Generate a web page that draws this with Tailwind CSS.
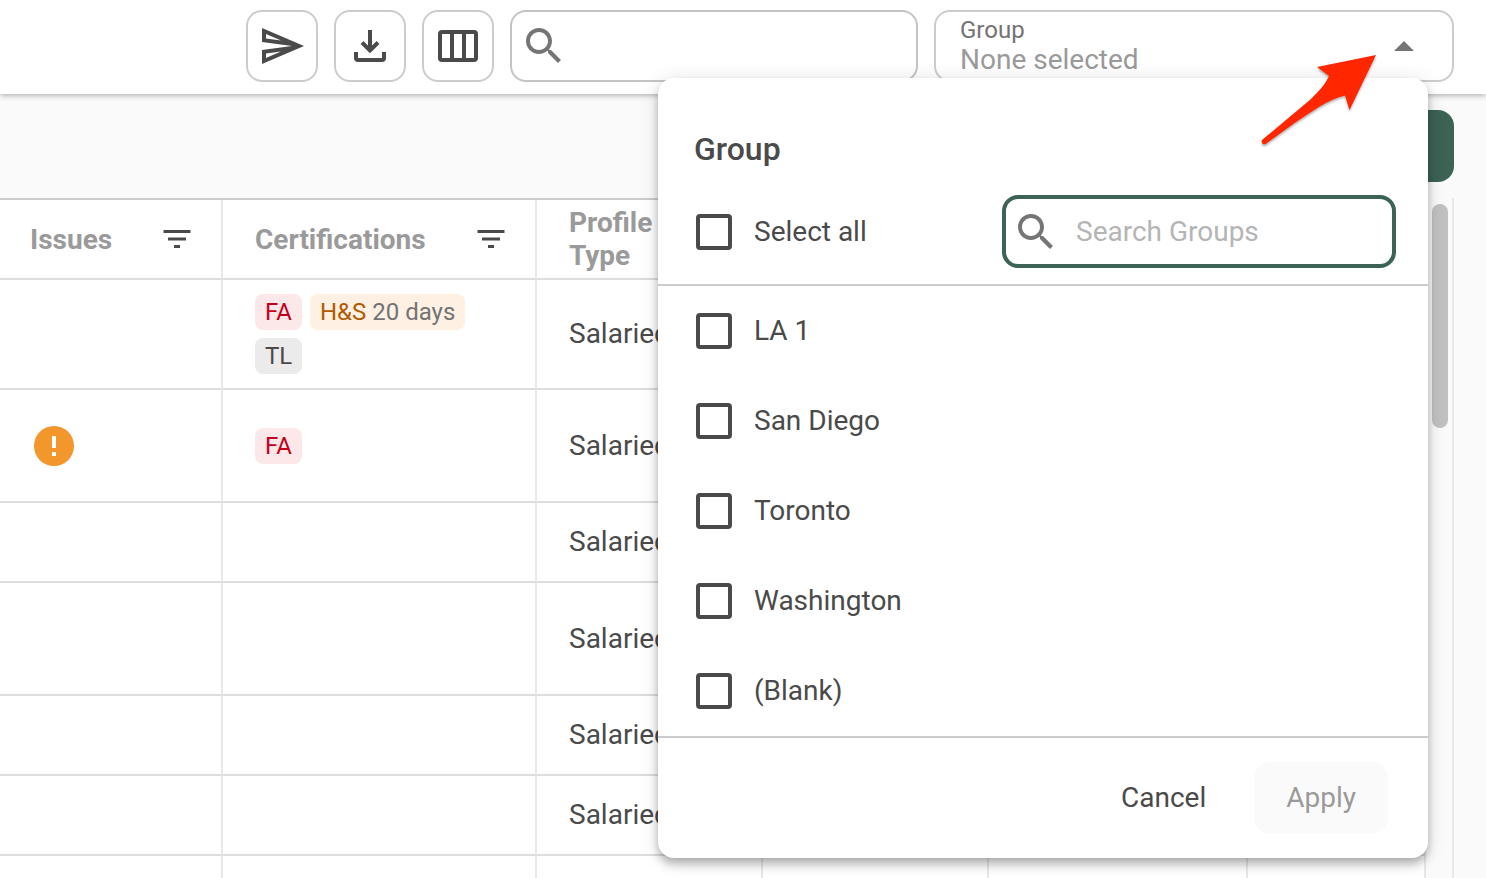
<!DOCTYPE html>
<html lang="en">
<head>
  <meta charset="UTF-8">
  <meta name="viewport" content="width=device-width, initial-scale=1.0">
  <title>Profiles</title>
  <script src="https://cdn.jsdelivr.net/npm/@tailwindcss/browser@4"></script>
</head>
<body class="h-screen overflow-hidden flex flex-col bg-[#fafafa] font-[Roboto,sans-serif] text-[28px] leading-8 text-[#4a4a4a]">

  <!-- Toolbar -->
  <header class="relative z-10 flex gap-4 bg-white pt-[10px] pb-3 pl-[246px] pr-8 shadow-[0_1px_6px_rgba(0,0,0,0.35)]">
    <button aria-label="Send" class="flex size-[72px] shrink-0 items-center justify-center rounded-2xl border-2 border-[#cccccc]">
      <svg class="size-12" viewBox="0 0 24 24" fill="#4a4a4a"><path d="M4.010 6.030l7.510 3.220-7.520-1 .01-2.220m7.500 8.720L4 17.970v-2.220l7.510-1M2.010 3L2 10l15 2-15 2 .01 7L23 12 2.010 3z"/></svg>
    </button>
    <button aria-label="Download" class="flex size-[72px] shrink-0 items-center justify-center rounded-2xl border-2 border-[#cccccc]">
      <svg class="size-8" viewBox="0 0 32 32" fill="none" stroke="#4a4a4a" stroke-width="4"><path d="M16 0V20M8 12.500 16 20.500 24 12.500M2 22V28Q2 30 4 30H28Q30 30 30 28V22"/></svg>
    </button>
    <button aria-label="Columns" class="flex size-[72px] shrink-0 items-center justify-center rounded-2xl border-2 border-[#cccccc]">
      <svg class="h-8 w-10" viewBox="0 0 40 32" fill="none" stroke="#4a4a4a" stroke-width="4"><rect x="2" y="2" width="36" height="28" rx="2"/><path d="M14 2V30M26 2V30"/></svg>
    </button>

    <label class="flex h-[72px] min-w-0 flex-[388] items-center gap-2 rounded-2xl border-2 border-[#c4c4c4] px-2">
      <svg class="size-12 shrink-0" viewBox="0 0 24 24" fill="#757575"><path d="M15.500 14h-.79l-.28-.27C15.410 12.590 16 11.110 16 9.500 16 5.910 13.090 3 9.500 3S3 5.910 3 9.500 5.910 16 9.500 16c1.610 0 3.090-.59 4.230-1.570l.27.28v.79l5 4.990L20.490 19l-4.990-5zm-6 0C7.010 14 5 11.990 5 9.500S7.010 5 9.500 5 14 7.010 14 9.500 11.990 14 9.500 14z"/></svg>
      <input type="search" aria-label="Search" class="min-w-0 flex-1 outline-none">
    </label>

    <div class="relative h-[72px] min-w-0 flex-[520]">
      <div class="flex h-full items-center rounded-2xl border-2 border-[#cccccc] pl-6 pr-[38px]">
        <div class="flex flex-1 flex-col">
          <label for="group" class="text-2xl leading-7 text-[#737373]">Group</label>
          <select id="group" class="appearance-none text-[#9a9a9a] outline-none">
            <option>None selected</option>
          </select>
        </div>
        <svg class="h-[10px] w-5" viewBox="0 0 20 10" fill="#757575"><path d="M0 10 10 0 20 10Z"/></svg>
      </div>

      <!-- Group menu -->
      <form class="absolute right-[26px] top-[68px] w-[770px] rounded-2xl bg-white shadow-[0_4px_8px_-2px_rgba(0,0,0,0.2),0_8px_10px_0_rgba(0,0,0,0.14),0_2px_20px_0_rgba(0,0,0,0.12)]">
        <div class="border-b-2 border-[#cccccc] pb-4 pl-9 pr-8 pt-[53px]">
          <h2 class="text-[32px] font-medium leading-9">Group</h2>
          <div class="mt-7 flex items-center justify-between">
            <label class="flex items-center gap-[22px] pl-[2px]">
              <input type="checkbox" class="size-9 appearance-none rounded-sm border-4 border-[#4a4a4a] checked:bg-[#4a4a4a]">
              Select all
            </label>
            <label class="flex h-[73px] w-[394px] items-center gap-4 rounded-2xl border-4 border-[#3d6355] px-[6px]">
              <svg class="size-12 shrink-0" viewBox="0 0 24 24" fill="#757575"><path d="M15.500 14h-.79l-.28-.27C15.410 12.590 16 11.110 16 9.500 16 5.910 13.090 3 9.500 3S3 5.910 3 9.500 5.910 16 9.500 16c1.610 0 3.090-.59 4.230-1.570l.27.28v.79l5 4.990L20.490 19l-4.990-5zm-6 0C7.010 14 5 11.990 5 9.500S7.010 5 9.500 5 14 7.010 14 9.500 11.990 14 9.500 14z"/></svg>
              <input type="text" aria-label="Search Groups" placeholder="Search Groups" class="min-w-0 flex-1 outline-none placeholder:text-[#b5b5b5]">
            </label>
          </div>
        </div>

        <div class="flex flex-col border-b-2 border-[#cccccc] pl-[38px] pr-8">
          <label class="flex h-[90px] items-center gap-[22px]">
            <input type="checkbox" class="size-9 appearance-none rounded-sm border-4 border-[#4a4a4a] checked:bg-[#4a4a4a]">
            LA 1
          </label>
          <label class="flex h-[90px] items-center gap-[22px]">
            <input type="checkbox" class="size-9 appearance-none rounded-sm border-4 border-[#4a4a4a] checked:bg-[#4a4a4a]">
            San Diego
          </label>
          <label class="flex h-[90px] items-center gap-[22px]">
            <input type="checkbox" class="size-9 appearance-none rounded-sm border-4 border-[#4a4a4a] checked:bg-[#4a4a4a]">
            Toronto
          </label>
          <label class="flex h-[90px] items-center gap-[22px]">
            <input type="checkbox" class="size-9 appearance-none rounded-sm border-4 border-[#4a4a4a] checked:bg-[#4a4a4a]">
            Washington
          </label>
          <label class="flex h-[90px] items-center gap-[22px]">
            <input type="checkbox" class="size-9 appearance-none rounded-sm border-4 border-[#4a4a4a] checked:bg-[#4a4a4a]">
            (Blank)
          </label>
        </div>

        <div class="flex justify-end gap-4 px-10 py-6">
          <button type="button" class="h-[72px] rounded-2xl px-8">Cancel</button>
          <button type="submit" disabled class="h-[72px] rounded-2xl bg-[#fafafa] px-8 text-[#9a9a9a]">Apply</button>
        </div>
      </form>

      <!-- Callout arrow -->
      <svg class="pointer-events-none absolute right-[76px] top-11 h-[94px] w-[118px] drop-shadow-[0_2px_1px_rgba(0,0,0,0.3)]" viewBox="1260 54 118 94" fill="#ff2600"><path d="M1376 55 1317 67 1329 76C1325 85 1318 92 1311 99L1262 140Q1261 143 1263 144 1265 145 1267 143L1296 122C1311 112 1329 99 1345 95.500L1349.500 110Z"/></svg>
    </div>
  </header>

  <div class="flex justify-end px-8 py-4">
    <button aria-label="Add profile" class="h-[72px] w-52 rounded-2xl bg-[#3d6355]"></button>
  </div>

  <!-- Profiles -->
  <main class="flex min-h-0 flex-1 pr-8">
    <div class="min-w-0 flex-1 overflow-hidden">
      <table class="w-full table-fixed border-separate border-spacing-0 border-t-2 border-[#cccccc] bg-white text-left [&_td]:border-b-2 [&_td]:border-r-2 [&_td]:border-b-[#dddddd] [&_td]:border-r-[#e8e8e8] [&_td]:py-0 [&_th]:border-b-2 [&_th]:border-r-2 [&_th]:border-b-[#dddddd] [&_th]:border-r-[#e8e8e8] [&_th]:py-0 [&_th]:font-bold">
        <colgroup>
          <col class="w-[223px]">
          <col class="w-[314px]">
          <col class="w-[226px]">
          <col class="w-[226px]">
          <col class="w-[259px]">
          <col>
        </colgroup>
        <thead class="leading-[33px] text-[#9a9a9a]">
          <tr class="h-20">
            <th class="pl-[30px] pr-[26px]">
              <div class="flex items-center justify-between">
                Issues
                <button aria-label="Filter issues">
                  <svg class="size-9" viewBox="0 0 24 24" fill="#4a4a4a"><path d="M10 18h4v-2h-4v2zM3 6v2h18V6H3zm3 7h12v-2H6v2z"/></svg>
                </button>
              </div>
            </th>
            <th class="pl-8 pr-[26px]">
              <div class="flex items-center justify-between">
                Certifications
                <button aria-label="Filter certifications">
                  <svg class="size-9" viewBox="0 0 24 24" fill="#4a4a4a"><path d="M10 18h4v-2h-4v2zM3 6v2h18V6H3zm3 7h12v-2H6v2z"/></svg>
                </button>
              </div>
            </th>
            <th class="pl-8 pr-24">Profile Type</th>
            <th></th>
            <th></th>
            <th></th>
          </tr>
        </thead>
        <tbody>
          <tr class="h-[110px]">
            <td></td>
            <td class="px-8">
              <div class="flex flex-wrap gap-2 text-2xl leading-9">
                <span class="rounded-lg bg-[#fce8e8] px-[10px] text-[#c3001b]">FA</span>
                <span class="rounded-lg bg-[#fef1e4] px-[10px] text-[#737373]"><span class="text-[#b35900]">H&amp;S</span> 20 days</span>
                <span class="rounded-lg bg-[#ebebeb] px-[10px]">TL</span>
              </div>
            </td>
            <td class="pl-8">Salaried</td>
            <td></td>
            <td></td>
            <td></td>
          </tr>
          <tr class="h-[113px]">
            <td class="pl-[34px]">
              <svg role="img" aria-label="Warning" class="size-10" viewBox="0 0 40 40"><circle cx="20" cy="20" r="20" fill="#f3962b"/><path fill="#fff" d="M18 10h4v12h-4zM18 26h4v4h-4z"/></svg>
            </td>
            <td class="px-8">
              <div class="flex text-2xl leading-9">
                <span class="rounded-lg bg-[#fce8e8] px-[10px] text-[#c3001b]">FA</span>
              </div>
            </td>
            <td class="pl-8">Salaried</td>
            <td></td>
            <td></td>
            <td></td>
          </tr>
          <tr class="h-20"><td></td><td></td><td class="pl-8">Salaried</td><td></td><td></td><td></td></tr>
          <tr class="h-[113px]"><td></td><td></td><td class="pl-8">Salaried</td><td></td><td></td><td></td></tr>
          <tr class="h-20"><td></td><td></td><td class="pl-8">Salaried</td><td></td><td></td><td></td></tr>
          <tr class="h-20"><td></td><td></td><td class="pl-8">Salaried</td><td></td><td></td><td></td></tr>
          <tr class="h-20"><td></td><td></td><td></td><td></td><td></td><td></td></tr>
        </tbody>
      </table>
    </div>
    <div class="w-7 border-r-2 border-[#e8e8e8] pl-[6px] pt-[6px]">
      <div class="h-56 w-4 rounded-full bg-[#c1c1c1]"></div>
    </div>
  </main>

</body>
</html>
